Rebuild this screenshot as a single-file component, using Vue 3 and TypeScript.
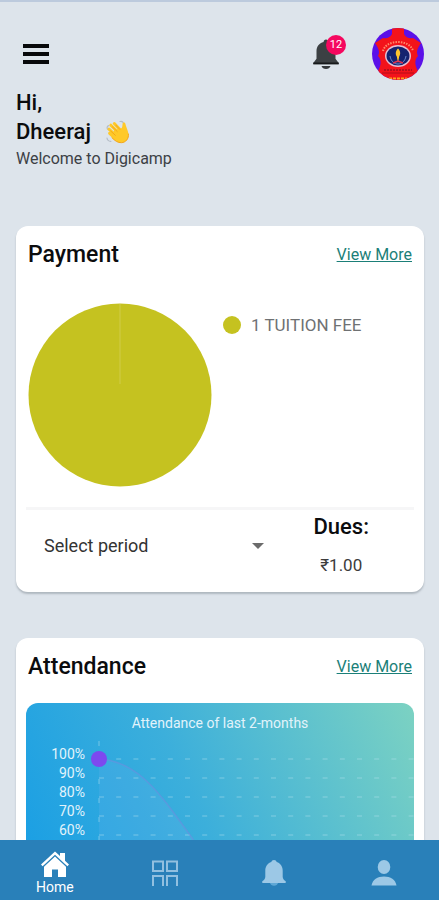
<script setup lang="ts">
import { ref } from 'vue'

interface FeeSlice {
  label: string
  color: string
}

const userName = ref('Dheeraj')
const unread = ref(12)
const period = ref('')
const periods: string[] = ['April', 'May', 'June']
const fees: FeeSlice[] = [{ label: '1 TUITION FEE', color: '#c5c220' }]
const dues = ref('₹1.00')

const rowHeight = 19
const gridRows = 11
const levels: number[] = [100, 90, 80, 70, 60]
</script>

<template>
  <div class="shell">
    <main class="content">
      <header class="topbar">
        <button class="icon-button menu" type="button" aria-label="Menu">
          <svg width="28" height="22" viewBox="0 0 28 22">
            <path d="M1 1h26v4H1zM1 9h26v4H1zM1 17h26v4H1z" fill="#08090b" />
          </svg>
        </button>
        <div class="actions">
          <button class="icon-button alerts" type="button" aria-label="Notifications">
            <svg width="26" height="32" viewBox="0 0 26 32">
              <path
                d="M13 1.500c1.400 0 2.400 1 2.400 2.400 4.500 1 7.100 4.700 7.100 9.300v7.600l3.200 4.200v1.500H.3V25l3.200-4.200v-7.600c0-4.600 2.600-8.300 7.100-9.300 0-1.400 1-2.400 2.400-2.400z"
                fill="#3c4043"
              />
              <path d="M.3 24.500h25.400V26H.3z" fill="#17191b" />
              <path d="M8.500 28h9c-.6 2-2.300 3-4.500 3s-3.900-1-4.500-3z" fill="#34383b" />
            </svg>
            <span class="badge">{{ unread }}</span>
          </button>
          <button class="icon-button" type="button" aria-label="Profile">
            <svg width="52" height="52" viewBox="0 0 52 52">
              <defs>
                <clipPath id="avatar-clip"><circle cx="26" cy="26" r="26" /></clipPath>
              </defs>
              <g clip-path="url(#avatar-clip)">
                <path d="M0 0h52v52H0z" fill="#5b10e8" />
                <path
                  d="M20 0h12v6c2 4 6 5 9 4l8 5c-4 6-5 9-3 13-4 4-3 10 0 15l-3 9H9l-3-9c3-5 4-11 0-15 2-4 1-7-3-13l8-5c3 1 7 0 9-4z"
                  fill="#f3131b"
                />
                <path d="M11 23C14 11 38 11 41 23" fill="none" stroke="#ff8a6a" stroke-width="2" stroke-dasharray="1.500 1.200" />
                <ellipse cx="26" cy="28" rx="13" ry="11" fill="#e9bfd0" />
                <ellipse cx="26" cy="28" rx="11.500" ry="9.500" fill="#15236f" />
                <path d="M18 28c1 6 5 8 8 8s7-2 8-8" fill="none" stroke="#6987ca" stroke-width="1" />
                <path d="M26 20.500c3 3 2.500 6 1.200 8L26 35l-1.200-6.500c-1.300-2-1.800-5 1.200-8z" fill="#ffc52f" />
                <path d="M21 35l5-2 5 2" fill="none" stroke="#dd3451" stroke-width="1.500" />
                <path d="M12 42h28" stroke="#a01020" stroke-width="1.500" stroke-dasharray="2 1" />
                <path d="M10 45h32" stroke="#b60d18" stroke-width="1" />
                <path d="M17 50.500h18" stroke="#ffa21c" stroke-width="2" stroke-dasharray="3 1" />
              </g>
            </svg>
          </button>
        </div>
      </header>

      <section class="greeting">
        <h1>
          Hi,<br />
          <span class="name">
            {{ userName }}
            <svg width="24" height="24" viewBox="0 0 24 24" aria-hidden="true">
              <path
                d="M1.500 9.200c-.8-1.600-.2-3 1-3.600M14 1.500c1.700-.5 3 .3 3.500 1.800M1 18c.3 2 1.800 3.300 3.800 3.400"
                fill="none"
                stroke="#b5bdc6"
                stroke-width="1.200"
                stroke-linecap="round"
              />
              <path
                d="M4.800 5.200l6.700 6.600M8.300 3.500l6.500 7M3 9.200l7 6.600M3.600 13.300l6 5.200"
                stroke="#ffc928"
                stroke-width="3"
                stroke-linecap="round"
              />
              <path
                d="M8 10l7.500-1.800c1.300-1.500.7-3.400 1.200-5 .5-1.300 2.400-1 2.700.5.400 3 2.600 6.500 3.100 10.300.7 4.600-2.600 8.500-7 8.700-3.800.2-6.500-2-9.500-5z"
                fill="#ffc928"
              />
              <path
                d="M6.400 6.800l4.800 4.700M9.800 5.100l4 4.300M4.600 10.900l4.700 4.400M22.400 14c.7 4.600-2.600 8.500-7 8.700-3.800.2-6.500-2-9.500-5"
                fill="none"
                stroke="#f2a116"
                stroke-width=".9"
                stroke-linecap="round"
              />
            </svg>
          </span>
        </h1>
        <p>Welcome to Digicamp</p>
      </section>

      <section class="card payment">
        <div class="card-head">
          <h2>Payment</h2>
          <a href="#payment">View More</a>
        </div>
        <div class="fees">
          <svg class="pie" width="184" height="184" viewBox="0 0 184 184" role="img" aria-label="Fees">
            <circle cx="92" cy="92" r="91.500" fill="#c5c220" />
            <path d="M92 1v80" stroke="#d0cc48" stroke-width="1" />
          </svg>
          <ul class="legend">
            <li v-for="fee in fees" :key="fee.label">
              <span class="dot" :style="{ background: fee.color }"></span>{{ fee.label }}
            </li>
          </ul>
        </div>
        <div class="summary">
          <div class="period">
            <select v-model="period" aria-label="Select period">
              <option value="">Select period</option>
              <option v-for="p in periods" :key="p" :value="p">{{ p }}</option>
            </select>
            <svg width="12" height="6" viewBox="0 0 12 6" aria-hidden="true">
              <path d="M0 0h12L6 6z" fill="#6b6b6b" />
            </svg>
          </div>
          <div class="dues">
            <h3>Dues:</h3>
            <p>{{ dues }}</p>
          </div>
        </div>
      </section>

      <section class="card attendance">
        <div class="card-head">
          <h2>Attendance</h2>
          <a href="#attendance">View More</a>
        </div>
        <div class="chart">
          <p class="chart-title">Attendance of last 2-months</p>
          <div class="chart-body">
            <ul class="levels">
              <li v-for="level in levels" :key="level">{{ level }}%</li>
            </ul>
            <svg class="plot" height="220" aria-hidden="true">
              <path
                d="M8 18C48 20 70 54 101 97C130 138 150 208 190 208H8z"
                fill="#7fb4f5"
                fill-opacity=".16"
              />
              <g stroke="#b9e6f2" stroke-opacity=".5">
                <line
                  v-for="row in gridRows"
                  :key="row"
                  x1="8"
                  x2="100%"
                  :y1="rowHeight * row - 1"
                  :y2="rowHeight * row - 1"
                  stroke-dasharray="5 12.200"
                />
                <line x1="8" x2="8" y1="0" y2="208" stroke-dasharray="5 14" />
              </g>
              <path
                d="M8 18C48 20 70 54 101 97C130 138 150 208 190 208"
                fill="none"
                stroke="#6b8fe0"
                stroke-opacity=".6"
                stroke-width="1.500"
              />
              <circle cx="8" cy="18" r="8" fill="#7d49ef" />
            </svg>
          </div>
        </div>
      </section>
    </main>

    <nav class="tabs">
      <a class="tab active" href="#home">
        <svg width="28" height="26" viewBox="0 0 28 26" aria-hidden="true">
          <path d="M0 13.500 14 .5l5 4.600V2h5v7.700l4 3.800-1.600 1.700L14 3.700 1.600 15.200z" fill="#fff" />
          <path d="M14 5.600 25 15.800V26h-8v-7.500h-6V26H3V15.800z" fill="#fff" />
        </svg>
        <span>Home</span>
      </a>
      <a class="tab" href="#modules" aria-label="Modules">
        <svg width="28" height="26" viewBox="0 0 28 26" aria-hidden="true">
          <path
            d="M2 1.500h10v9.500H2zM16 1.500h10v9.500H16zM2 26V16h10v10M16 26V16h10v10"
            fill="none"
            stroke="#92c0e0"
            stroke-width="2"
          />
        </svg>
      </a>
      <a class="tab" href="#notices" aria-label="Notices">
        <svg width="24" height="26" viewBox="0 0 24 26" aria-hidden="true">
          <path
            d="M12 0c1.400 0 2.400.9 2.700 2.100 3.800 1.300 6 4.500 6 8.600v6c0 1.800 1.200 3.200 2.700 4.300.9.800.5 2.100-.7 2.100H1.300C.1 23.100-.3 21.800.6 21c1.500-1.100 2.700-2.500 2.700-4.300v-6c0-4.100 2.200-7.300 6-8.600C9.600.9 10.600 0 12 0z"
            fill="#9cc8e6"
          />
          <path d="M8 23.100h8c-.4 1.600-2 2.600-4 2.600s-3.600-1-4-2.600z" fill="#5fa8d6" />
        </svg>
      </a>
      <a class="tab" href="#account" aria-label="Account">
        <svg width="26" height="26" viewBox="0 0 26 26" aria-hidden="true">
          <ellipse cx="13" cy="7" rx="6.300" ry="7" fill="#9cc8e6" />
          <path d="M.5 25.500c1-6 6-9 12.500-9s11.500 3 12.500 9z" fill="#9cc8e6" />
        </svg>
      </a>
    </nav>
  </div>
</template>

<style>
body {
  background: #dde4eb;
}
</style>

<style scoped>
.shell {
  display: flex;
  flex-direction: column;
  height: 100vh;
  box-sizing: border-box;
  border-top: 2px solid #bccadd;
  font-family: Roboto, 'Liberation Sans', sans-serif;
  color: #0b0c0e;
}

h1,
h2,
h3,
p,
ul {
  margin: 0;
  padding: 0;
  list-style: none;
}

svg {
  display: block;
  flex: none;
}

.content {
  flex: 1;
  min-height: 0;
  overflow-y: auto;
  scrollbar-width: none;
  padding: 26px 15px 0 16px;
}

.topbar,
.actions {
  display: flex;
  align-items: center;
  justify-content: space-between;
}

.actions {
  gap: 33px;
}

.icon-button {
  position: relative;
  padding: 0;
  border: 0;
  background: none;
}

.menu {
  padding-left: 6px;
}

.badge {
  position: absolute;
  top: -3px;
  right: -7px;
  width: 20px;
  border-radius: 10px;
  background: #f5085f;
  color: #fff;
  font: 400 11px/20px Roboto, sans-serif;
  text-align: center;
}

.greeting {
  padding-top: 8px;
}

h1 {
  font-size: 22px;
  line-height: 29px;
  font-weight: 500;
}

.name {
  display: flex;
  align-items: center;
  gap: 15px;
}

.greeting p {
  padding-top: 3px;
  font-size: 16px;
  line-height: 20px;
  color: #3c4045;
}

.card {
  padding: 15px 10px 10px;
  border-radius: 12px;
  background: #fff;
  box-shadow: 0 2px 2px rgba(90, 100, 110, 0.35);
}

.payment {
  margin-top: 57px;
}

.attendance {
  margin-top: 46px;
}

.card-head {
  display: flex;
  align-items: center;
  justify-content: space-between;
  padding: 0 2px;
}

h2 {
  font-size: 23px;
  line-height: 28px;
  font-weight: 500;
}

.card-head a {
  color: #1b7f78;
  font-size: 16px;
  line-height: 20px;
}

.fees {
  display: flex;
  gap: 11px;
  padding: 34px 2px 20px;
}

.legend {
  padding-top: 12px;
  color: #6f7173;
  font-size: 17px;
  line-height: 20px;
}

.legend li {
  display: flex;
  align-items: center;
  gap: 10px;
}

.dot {
  width: 18px;
  height: 18px;
  border-radius: 50%;
}

.summary {
  display: grid;
  grid-template-columns: 5fr 3fr;
  border-top: 3px solid #f6f6f7;
}

.period {
  display: grid;
  align-items: center;
  padding: 0 5px 0 18px;
}

.period select,
.period svg {
  grid-area: 1 / 1;
}

.period svg {
  justify-self: end;
  pointer-events: none;
}

.period select {
  appearance: none;
  width: 100%;
  padding: 0;
  border: 0;
  background: none;
  color: #333;
  font: 400 18px/28px Roboto, sans-serif;
}

.dues {
  padding: 3px 0 7px;
  text-align: center;
}

.dues h3 {
  font-size: 22px;
  line-height: 28px;
  font-weight: 500;
}

.dues p {
  padding-top: 14px;
  color: #3c3c3c;
  font-size: 17px;
  line-height: 20px;
}

.chart {
  margin-top: 22px;
  border-radius: 12px;
  overflow: hidden;
  background: linear-gradient(65deg, #129be6, #3cafdb 48%, #7cd2c2);
  color: #e2f3fb;
  font-size: 14px;
}

.chart-title {
  padding-top: 10px;
  line-height: 20px;
  text-align: center;
}

.chart-body {
  display: flex;
  gap: 6px;
}

.levels {
  width: 59px;
  padding-top: 12px;
  line-height: 19px;
  text-align: right;
}

.plot {
  flex: 1;
  min-width: 0;
  margin-top: 8px;
}

.tabs {
  display: grid;
  grid-template-columns: repeat(4, 1fr);
  height: 60px;
  background: #2980b9;
}

.tab {
  display: flex;
  flex-direction: column;
  align-items: center;
  justify-content: center;
  gap: 2px;
  padding-top: 6px;
  color: #fff;
  font-size: 14px;
  line-height: 16px;
  text-decoration: none;
}
</style>
